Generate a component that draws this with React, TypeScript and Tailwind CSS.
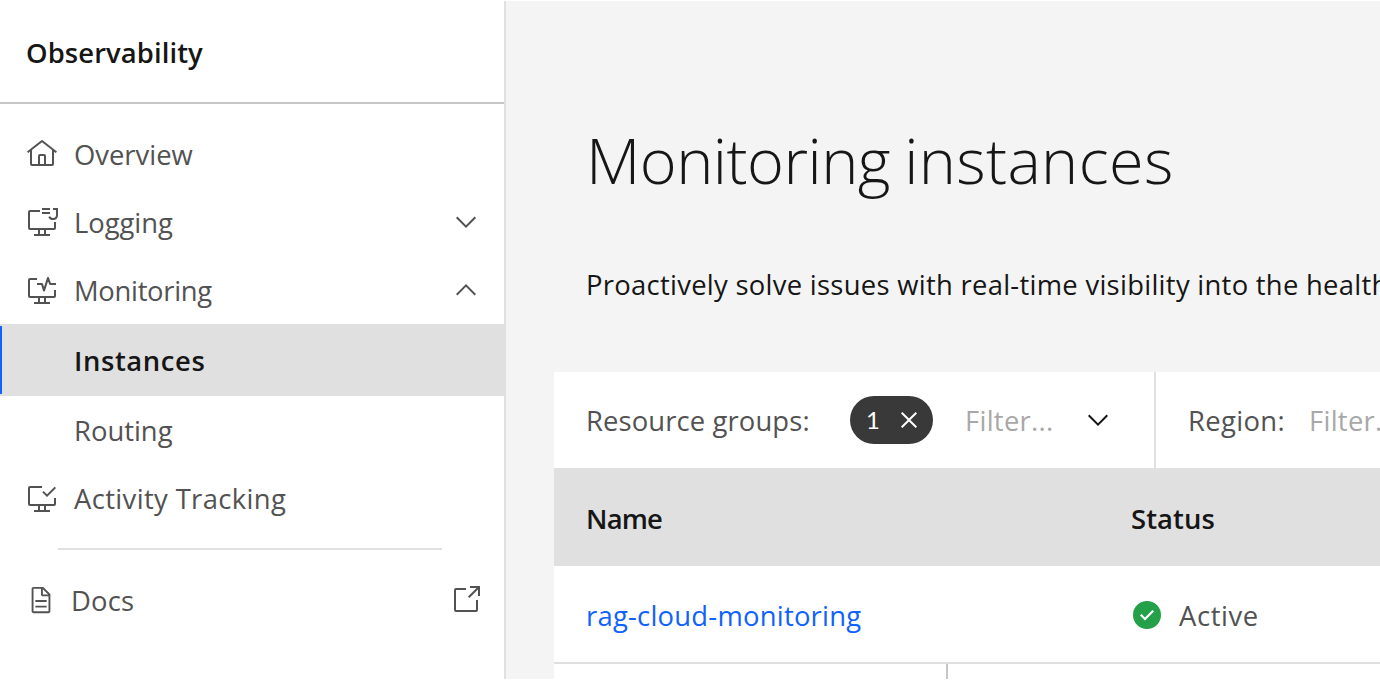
import React from "react";

type IconProps = { className?: string; children: React.ReactNode };

function Icon({ className = "size-8", children }: IconProps) {
  return (
    <svg viewBox="0 0 32 32" fill="currentColor" className={`shrink-0 overflow-visible ${className}`} aria-hidden="true">
      {children}
    </svg>
  );
}

const HomeIcon = () => (
  <Icon>
    <path d="M16.6123,2.2138a1.01,1.01,0,0,0-1.2427,0L1,13.4194l1.2427,1.5717L4,13.6209V26a2.0041,2.0041,0,0,0,2,2H26a2.0037,2.0037,0,0,0,2-2V13.63L29.7573,15,31,13.4282ZM18,26H14V18h4Zm2,0V18a2.0023,2.0023,0,0,0-2-2H14a2.002,2.002,0,0,0-2,2v8H6V12.0615l10-7.79,10,7.8005V26Z" />
  </Icon>
);

const Stand = () => <path d="M8,28h4v-4h2v4h4v-4h2v4h4v2H8Z" />;

const LoggingIcon = () => (
  <Icon>
    <path d="M14,4H4A2,2,0,0,0,2,6V22a2,2,0,0,0,2,2H28a2,2,0,0,0,2-2V16H28v6H4V6H14Z" />
    <Stand />
    <path d="M16,2h8v2h-8ZM16,6h8v2h-8Z" />
    <path d="M27 3H31V9C31 11.4 29.4 13 27 13C25 13 23.8 12.3 23.2 10.6" fill="none" stroke="currentColor" strokeWidth="2" />
  </Icon>
);

const MonitoringIcon = () => (
  <Icon>
    <path d="M11,4H4A2,2,0,0,0,2,6V22a2,2,0,0,0,2,2H28a2,2,0,0,0,2-2V16H28v6H4V6H11Z" />
    <Stand />
    <path d="M11 10H16L18 16.5L22 4L24.2 10H30" fill="none" stroke="currentColor" strokeWidth="2.1" strokeLinejoin="round" />
  </Icon>
);

const ActivityIcon = () => (
  <Icon>
    <path d="M16,4H4A2,2,0,0,0,2,6V22a2,2,0,0,0,2,2H28a2,2,0,0,0,2-2V16H28v6H4V6H16Z" />
    <Stand />
    <path d="M16.9 9.6L21 13.6L29.3 5.4" fill="none" stroke="currentColor" strokeWidth="2" />
  </Icon>
);

const DocumentIcon = () => (
  <Icon className="size-[30px]">
    <path d="M25.7,9.3l-7-7C18.5,2.1,18.3,2,18,2H8C6.9,2,6,2.9,6,4v24c0,1.1,0.9,2,2,2h16c1.1,0,2-0.9,2-2V10C26,9.7,25.9,9.5,25.7,9.3zM18,4.4l5.6,5.6H18V4.4zM24,28H8V4h8v6c0,1.1,0.9,2,2,2h6V28z" />
    <path d="M10,22h12v2H10ZM10,16h12v2H10Z" />
  </Icon>
);

const LaunchIcon = () => (
  <Icon>
    <path d="M26,28H6a2.0027,2.0027,0,0,1-2-2V6A2.0027,2.0027,0,0,1,6,4H16V6H6V26H26V16h2V26A2.0027,2.0027,0,0,1,26,28Z" />
    <path d="M20 2V4H26.586L18 12.586L19.414 14L28 5.414V12H30V2Z" />
  </Icon>
);

const ChevronDown = () => (
  <Icon>
    <path d="M16 22L6 12L7.4 10.6L16 19.2L24.6 10.6L26 12Z" />
  </Icon>
);

const ChevronUp = () => (
  <Icon>
    <path d="M16 10L26 20L24.6 21.4L16 12.8L7.4 21.4L6 20Z" />
  </Icon>
);

const CloseIcon = () => (
  <Icon>
    <path d="M24 9.4L22.6 8L16 14.6L9.4 8L8 9.4L14.6 16L8 22.6L9.4 24L16 17.4L22.6 24L24 22.6L17.4 16Z" />
  </Icon>
);

const CheckIcon = () => (
  <Icon className="size-8 text-[#24a148]">
    <path d="M16,2A14,14,0,1,0,30,16,14,14,0,0,0,16,2ZM14,21.5908l-5-5L10.5906,15,14,18.4092,21.41,11l1.5957,1.5859Z" />
  </Icon>
);

function NavRow({ icon, trailing, children }: { icon?: React.ReactNode; trailing?: React.ReactNode; children: React.ReactNode }) {
  return (
    <li className="flex h-[68px] items-center pr-[22px] pl-[26px]">
      <span className="w-12 shrink-0">{icon}</span>
      <span className="grow pt-0.5">{children}</span>
      {trailing}
    </li>
  );
}

function Sidebar() {
  return (
    <nav className="w-[506px] shrink-0 border-r-2 border-[#e0e0e0] bg-white text-[#525252]">
      <div className="flex h-[103px] items-center border-b-2 border-[#c6c6c6] pt-[2px] pl-[26px] font-semibold tracking-[0.1px] text-[#161616]">
        Observability
      </div>
      <ul className="pt-4">
        <NavRow icon={<HomeIcon />}><span className="tracking-[0px]">Overview</span></NavRow>
        <NavRow icon={<LoggingIcon />} trailing={<ChevronDown />}><span className="tracking-[-0.05px]">Logging</span></NavRow>
        <NavRow icon={<MonitoringIcon />} trailing={<ChevronUp />}><span className="tracking-[-0.3px]">Monitoring</span></NavRow>
        <li className="flex h-[72px] items-center bg-[#e0e0e0] font-semibold text-[#161616]">
          <span className="mr-[72px] h-[68px] w-0.5 bg-[#0f62fe]" />
          <span className="pt-0.5 tracking-[0.6px]">Instances</span>
        </li>
        <NavRow><span className="tracking-[0px]">Routing</span></NavRow>
        <NavRow icon={<ActivityIcon />}><span className="tracking-[0.37px]">Activity Tracking</span></NavRow>
      </ul>
      <hr className="mt-4 mr-[62px] ml-[58px] border-0 border-t-2 border-[#e0e0e0]" />
      <div className="mt-4 flex h-[68px] items-center pr-[22px] pl-[25.5px]">
        <DocumentIcon />
        <span className="ml-[15.5px] grow pt-0.5 tracking-[0.18px]">Docs</span>
        <LaunchIcon />
      </div>
    </nav>
  );
}

function Filters() {
  return (
    <div className="flex h-24 shrink-0 items-center bg-white text-[#525252]">
      <div className="flex h-full w-[602px] shrink-0 items-center border-r-2 border-[#e0e0e0] pl-8">
        <span className="w-[264px] pt-0.5 tracking-[0.12px]">Resource groups:</span>
        <span className="flex h-12 w-[83px] items-center rounded-full bg-[#393939] pl-4 font-['Lato',sans-serif] text-2xl text-white">
          <span className="w-[27px]">1</span>
          <CloseIcon />
        </span>
        <span className="ml-8 w-[117px] pt-0.5 tracking-[0.3px] text-[#a8a8a8]">Filter...</span>
        <span className="text-[#161616]"><ChevronDown /></span>
      </div>
      <span className="ml-8 w-[121px] shrink-0 pt-0.5 tracking-[0.35px]">Region:</span>
      <span className="pt-0.5 tracking-[0.3px] text-[#a8a8a8]">Filter...</span>
    </div>
  );
}

function InstanceTable() {
  return (
    <>
      <div className="flex h-[98px] shrink-0 items-center bg-[#e0e0e0] pt-1 pl-8 font-semibold text-[#161616]">
        <span className="w-[545px] shrink-0 tracking-[-0.8px]">Name</span>
        <span className="tracking-[0.1px]">Status</span>
      </div>
      <div className="flex h-[98px] shrink-0 items-center border-b-2 border-[#e0e0e0] bg-white pt-[2px] pl-8 text-[#525252]">
        <a className="w-[545px] shrink-0 pt-0.5 tracking-[0.24px] text-[#0f62fe]">rag-cloud-monitoring</a>
        <CheckIcon />
        <span className="ml-4 pt-0.5 tracking-[0.6px]">Active</span>
      </div>
      <div className="flex grow bg-white">
        <span className="w-[394px] border-r-2 border-[#c6c6c6]" />
      </div>
    </>
  );
}

export default function App() {
  return (
    <div className="flex h-[680px] w-[1380px] overflow-hidden border-y border-white bg-[#f4f4f4] font-['Open_Sans','Noto_Sans',sans-serif] text-[27.4px] leading-9 whitespace-nowrap">
      <Sidebar />
      <main className="flex min-w-0 grow flex-col overflow-hidden pl-12">
        <h1 className="mt-[119px] ml-8 text-[63px] leading-[80px] font-light text-[#161616]">
          <span className="tracking-[-0.55px]">Monitoring</span>
          <span className="tracking-[-2.2px]"> </span>
          <span className="tracking-[0.35px]">instances</span>
        </h1>
        <p className="mt-[67px] mb-[69px] ml-8 tracking-[0.29px] text-[#161616]">
          Proactively solve issues with real-time visibility into the health
        </p>
        <Filters />
        <InstanceTable />
      </main>
    </div>
  );
}
